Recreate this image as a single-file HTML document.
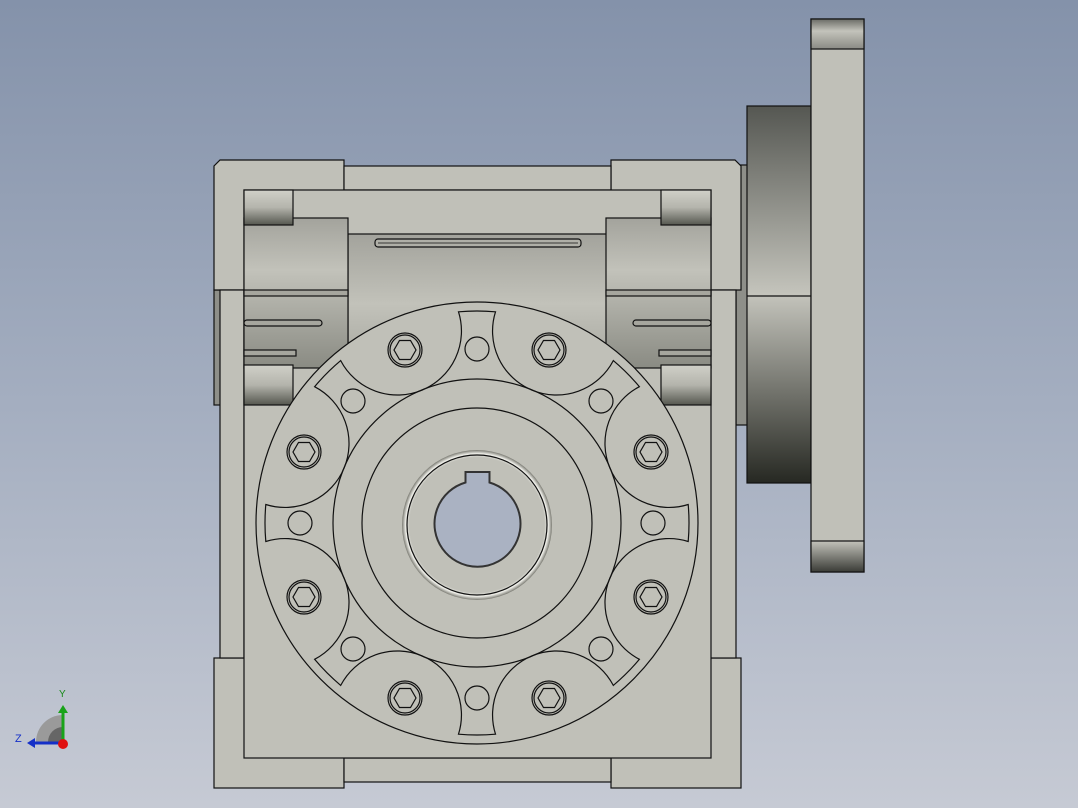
<!DOCTYPE html>
<html><head><style>
html,body{margin:0;padding:0;}
body{width:1078px;height:808px;overflow:hidden;background:linear-gradient(#8492aa,#a4aec0 50%,#c6cad4);}
svg{position:absolute;left:0;top:0;}
text{font-family:"Liberation Sans",sans-serif;}
</style></head><body>
<svg width="1078" height="808" viewBox="0 0 1078 808">
<defs>
<linearGradient id="cyl" x1="0" y1="0" x2="0" y2="1">
<stop offset="0" stop-color="#d0d0c8"/><stop offset="0.5" stop-color="#b4b4ac"/><stop offset="1" stop-color="#55574f"/></linearGradient>
<linearGradient id="drum" x1="0" y1="0" x2="0" y2="1">
<stop offset="0" stop-color="#555752"/><stop offset="0.5" stop-color="#c4c4bc"/><stop offset="1" stop-color="#262822"/></linearGradient>
<linearGradient id="shaft" x1="0" y1="0" x2="0" y2="1">
<stop offset="0" stop-color="#a3a39c"/><stop offset="0.35" stop-color="#c2c2ba"/><stop offset="1" stop-color="#8a8b83"/></linearGradient>
<linearGradient id="fl" x1="0" y1="0" x2="0" y2="1">
<stop offset="0" stop-color="#6a6b65"/><stop offset="0.4" stop-color="#c3c3bb"/><stop offset="1" stop-color="#8a8a84"/></linearGradient>
<linearGradient id="fl2" x1="0" y1="0" x2="0" y2="1">
<stop offset="0" stop-color="#c3c3bb"/><stop offset="1" stop-color="#3a3b36"/></linearGradient>
<radialGradient id="ring" cx="0.5" cy="0.5" r="0.5">
<stop offset="0.9" stop-color="#c0c0b8"/><stop offset="0.95" stop-color="#f0f0ea"/><stop offset="1" stop-color="#7a7a72"/></radialGradient>
</defs>
<g stroke="#111" stroke-width="1.2" fill="#c0c0b8">
<rect x="736" y="165" width="12" height="260" fill="#8e8f89"/>
<rect x="747" y="106" width="64" height="377" fill="url(#drum)"/>
<line x1="747" y1="296" x2="811" y2="296"/>
<rect x="811" y="19" width="53" height="553"/>
<rect x="811" y="19" width="53" height="30" fill="url(#fl)"/>
<rect x="811" y="541" width="53" height="31" fill="url(#fl2)"/>
<rect x="214" y="290" width="8" height="115" fill="#8e8f89"/>
<path d="M220 160 H344 V290 H214 V166 Z"/>
<path d="M611 160 H735 L741 166 V290 H611 Z"/>
<rect x="344" y="166" width="267" height="24"/>
<rect x="214" y="658" width="130" height="130"/>
<rect x="611" y="658" width="130" height="130"/>
<rect x="344" y="758" width="267" height="24"/>
<rect x="220" y="290" width="24" height="368"/>
<rect x="710" y="290" width="26" height="368"/>
<rect x="244" y="190" width="467" height="568"/>
<rect x="348" y="234" width="260" height="200" fill="url(#shaft)"/>
<rect x="244" y="218" width="104" height="150" fill="url(#shaft)"/>
<rect x="606" y="218" width="105" height="150" fill="url(#shaft)"/>
<rect x="244" y="190" width="49" height="35" fill="url(#cyl)"/>
<rect x="661" y="190" width="50" height="35" fill="url(#cyl)"/>
<rect x="244" y="365" width="49" height="40" fill="url(#cyl)"/>
<rect x="661" y="365" width="50" height="40" fill="url(#cyl)"/>
<rect x="375" y="239" width="206" height="8" rx="3" fill="#b0b0a8"/>
<line x1="378" y1="243" x2="578" y2="243" stroke-width="0.7"/>
<g fill="#a6a69e">
<rect x="244" y="290" width="104" height="6"/><rect x="244" y="320" width="78" height="6" rx="3"/><rect x="244" y="350" width="52" height="6"/>
<rect x="606" y="290" width="105" height="6"/><rect x="633" y="320" width="78" height="6" rx="3"/><rect x="659" y="350" width="52" height="6"/>
</g>
<circle cx="477" cy="523" r="221"/>
<path fill="none" d="M458.5,311.8 A212 212 0 0 1 495.5,311.8 A64 64 0 0 0 613.3,360.6 A212 212 0 0 1 639.4,386.7 A64 64 0 0 0 688.2,504.5 A212 212 0 0 1 688.2,541.5 A64 64 0 0 0 639.4,659.3 A212 212 0 0 1 613.3,685.4 A64 64 0 0 0 495.5,734.2 A212 212 0 0 1 458.5,734.2 A64 64 0 0 0 340.7,685.4 A212 212 0 0 1 314.6,659.3 A64 64 0 0 0 265.8,541.5 A212 212 0 0 1 265.8,504.5 A64 64 0 0 0 314.6,386.7 A212 212 0 0 1 340.7,360.6 A64 64 0 0 0 458.5,311.8 Z"/>
<circle cx="477" cy="523" r="144" fill="none"/>
<circle cx="477" cy="523" r="115" fill="none"/>
<g fill="none">
<circle cx="477" cy="349" r="12"/><circle cx="601" cy="401" r="12"/><circle cx="653" cy="523" r="12"/><circle cx="601" cy="649" r="12"/>
<circle cx="477" cy="698" r="12"/><circle cx="353" cy="649" r="12"/><circle cx="300" cy="523" r="12"/><circle cx="353" cy="401" r="12"/>
</g>
<g fill="none">
<g transform="translate(405,350)"><circle r="17"/><circle r="15"/><polygon points="11,0 5.5,9.5 -5.5,9.5 -11,0 -5.5,-9.5 5.5,-9.5"/></g>
<g transform="translate(549,350)"><circle r="17"/><circle r="15"/><polygon points="11,0 5.5,9.5 -5.5,9.5 -11,0 -5.5,-9.5 5.5,-9.5"/></g>
<g transform="translate(304,452)"><circle r="17"/><circle r="15"/><polygon points="11,0 5.5,9.5 -5.5,9.5 -11,0 -5.5,-9.5 5.5,-9.5"/></g>
<g transform="translate(651,452)"><circle r="17"/><circle r="15"/><polygon points="11,0 5.5,9.5 -5.5,9.5 -11,0 -5.5,-9.5 5.5,-9.5"/></g>
<g transform="translate(304,597)"><circle r="17"/><circle r="15"/><polygon points="11,0 5.5,9.5 -5.5,9.5 -11,0 -5.5,-9.5 5.5,-9.5"/></g>
<g transform="translate(651,597)"><circle r="17"/><circle r="15"/><polygon points="11,0 5.5,9.5 -5.5,9.5 -11,0 -5.5,-9.5 5.5,-9.5"/></g>
<g transform="translate(405,698)"><circle r="17"/><circle r="15"/><polygon points="11,0 5.5,9.5 -5.5,9.5 -11,0 -5.5,-9.5 5.5,-9.5"/></g>
<g transform="translate(549,698)"><circle r="17"/><circle r="15"/><polygon points="11,0 5.5,9.5 -5.5,9.5 -11,0 -5.5,-9.5 5.5,-9.5"/></g>
</g>
<circle cx="477" cy="525" r="75" fill="url(#ring)" stroke="none"/>
<circle cx="477" cy="525" r="70" fill="none"/>
<path d="M465.5,482.5 V472 H489.5 V482.5 A43 43 0 1 1 465.5,482.5 Z" fill="#aab2c2" stroke="#333" stroke-width="2"/>
</g>
<g>
<path d="M36,742 A27 27 0 0 1 63,715 V742 Z" fill="#9a9a9a"/>
<path d="M48,742 A15 15 0 0 1 63,727 V742 Z" fill="#666"/>
<line x1="63" y1="742" x2="63" y2="712" stroke="#19a319" stroke-width="3"/>
<polygon points="58,713 68,713 63,705" fill="#19a319"/>
<line x1="63" y1="743" x2="34" y2="743" stroke="#1530c8" stroke-width="3"/>
<polygon points="35,738 35,748 27,743" fill="#1530c8"/>
<circle cx="63" cy="744" r="5" fill="#e01010"/>
<text x="59" y="697" font-size="10" fill="#1a8a1a">Y</text>
<text x="15" y="742" font-size="11" fill="#1530c8">Z</text>
</g>
</svg>
</body></html>
